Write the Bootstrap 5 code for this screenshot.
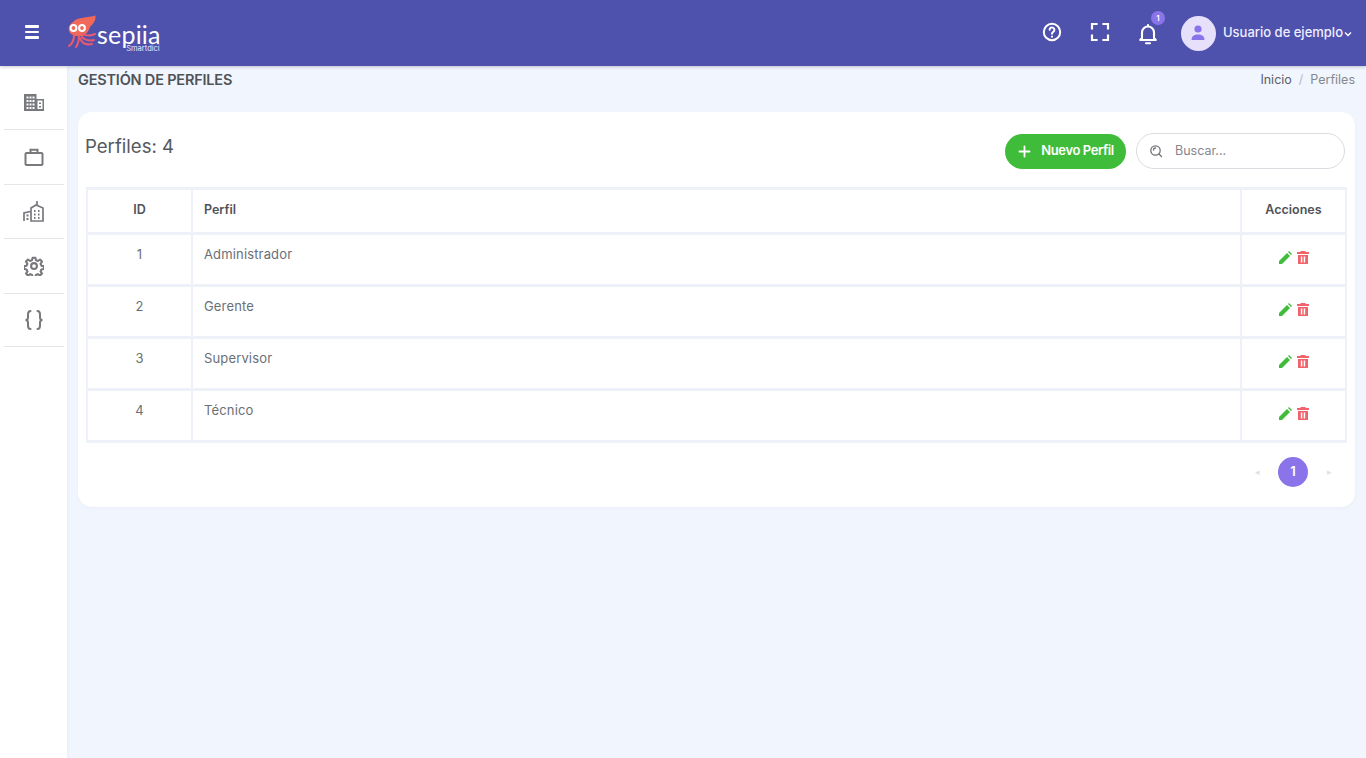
<!DOCTYPE html>
<html lang="es">
<head>
<meta charset="utf-8">
<title>Perfiles</title>
<link href="https://cdn.jsdelivr.net/npm/bootstrap@5.3.0/dist/css/bootstrap.min.css" rel="stylesheet">
<style>
html,body{height:100%;}
body{font-family:Inter,"Liberation Sans",sans-serif;background:#f1f5fd;color:#6a6f76;overflow:hidden;}
.topbar{height:66px;background:#4e52ac;color:#fff;padding:0 14px 0 25px;box-shadow:0 1px 3px rgba(40,40,90,.25);position:relative;z-index:2;}
.burger{width:14px;display:flex;flex-direction:column;gap:3px;margin:0 29px 2px 0;}
.burger span{display:block;height:2.4px;border-radius:1px;background:#fff;}
.logo-mark{flex:none;margin-top:-2px;}
.brand-word{font-size:25px;line-height:22px;letter-spacing:.2px;color:#fff;font-family:Lato,sans-serif;}
.brand-sub{font-size:7.5px;line-height:7px;color:#e8e8ff;text-align:right;margin-right:1px;}
.brand-box{margin-top:8px;margin-left:-1px;}
.top-ico{width:24px;height:24px;position:relative;display:block;margin-bottom:2px;}
.gap-ico{margin-left:24px;}
.alert-dot{position:absolute;top:-9px;right:-5px;width:14px;height:14px;border-radius:50%;background:#8b74ea;color:#fff;font-size:8px;line-height:14px;text-align:center;font-weight:600;}
.avatar{width:35px;height:35px;border-radius:50%;background:#e6e0fb;margin-left:21px;}
.user-name{font-size:13px;font-weight:500;color:#eef;margin-left:7px;}
.chev{margin-left:1px;margin-top:1px;}
.shell{height:692px;}
.rail{width:67px;flex:none;background:#fff;padding:9px 3px 0 4px;box-shadow:1px 0 3px rgba(60,70,120,.05);}
.rail-item{height:54.5px;border-bottom:1px solid #e5e6e9;display:flex;align-items:center;justify-content:center;}
.rail-item:first-child{height:55px;}
.rail-item:last-child{height:53.5px;}
.main{padding:0 11px;min-width:0;}
.page-head{height:46px;padding-top:5px;}
.page-title{font-size:14.5px;font-weight:600;color:#4f5358;margin:0;line-height:18px;letter-spacing:-.2px;}
.crumbs{font-size:12.5px;line-height:18px;margin:0;--bs-breadcrumb-divider-color:#b5b8bd;--bs-breadcrumb-item-padding-x:7px;--bs-breadcrumb-margin-bottom:0;}
.crumbs .breadcrumb-item{color:#85898f;}
.crumbs a{color:#5c6066;text-decoration:none;}
.sheet{border:0;border-radius:14px;background:#fff;padding:21px 8px 0 8px;height:395px;box-shadow:0 1px 3px rgba(80,90,140,.05);}
.sheet-head{height:54px;}
.sheet-title{font-size:18.6px;line-height:26px;margin:0 0 0 -1px;color:#55595f;font-weight:400;}
.btn-new{background:#3fbd3a;border:0;color:#fff;border-radius:18px;height:35px;width:121px;font-size:13px;font-weight:600;padding:0 0 1px 1px;letter-spacing:-.4px;margin-top:1px;gap:10px;}
.btn-new:hover{background:#3fbd3a;color:#fff;}
.search-box{width:209px;height:36px;margin:0 2px 0 10px;border:1px solid #d9dce0;border-radius:18px;padding:0 12px;gap:12px;}
.search-box input{border:0;outline:0;background:transparent;font-size:12.5px;width:140px;padding:0;color:#666;}
.search-box input::placeholder{color:#84878f;opacity:1;}
.perfil-table{border-collapse:collapse;width:100%;margin:0;table-layout:fixed;color:#6a6f76;}
.perfil-table th,.perfil-table td{border-style:solid;border-color:#eef1f8;border-width:3px 2px;padding:0 11px;font-size:13px;letter-spacing:.15px;}
.perfil-table th{height:45px;color:#4f5358;font-weight:600;font-size:12.5px;vertical-align:middle;padding-bottom:2px;letter-spacing:0;}
.perfil-table td{height:52px;vertical-align:top;padding-top:9px;line-height:20px;}
.perfil-table td.acts{padding-top:15px;}
.acts-row{gap:3px;}
.pager{margin:14px 0 0;justify-content:flex-end;}
.pager .pg{width:30px;height:30px;display:flex;align-items:center;justify-content:center;font-size:9px;color:#dfe1e5;border-radius:50%;margin:0 3px;}
.pager .pg.on{background:#8b74ea;color:#fff;font-size:13px;font-weight:600;}
</style>
</head>
<body>
<nav class="topbar d-flex align-items-center">
  <div class="burger"><span></span><span></span><span></span></div>
  <svg class="logo-mark" width="30" height="34" viewBox="0 0 30 34" aria-hidden="true">
    <path d="M27.500.5C20 3 10 2 6 6 2 9 0 12 1 16c1 3 4 4 6 5h8c4-2 6-6 7-9 3-3 6-6 5.500-11.500z" fill="#f0695a"/>
    <g fill="none" stroke="#e85a70" stroke-width="2.100" stroke-linecap="round">
      <path d="M6 20C6 25 4 29 1 31M11 21c0 5-1 8-3 11M15 19c3 2 7 2 12 0M14 22c4 4 8 4 12 3M12 23c2 6 7 7 12 6"/>
    </g>
    <circle cx="5.500" cy="13" r="3.900" fill="#fff"/><circle cx="14" cy="13" r="3.900" fill="#fff"/>
    <circle cx="5.500" cy="13" r="1.900" fill="#ee6a5a"/><circle cx="14" cy="13" r="1.900" fill="#ee6a5a"/>
  </svg>
  <div class="brand-box">
    <div class="brand-word">sepiia</div>
    <div class="brand-sub">Smartdici</div>
  </div>
  <div class="ms-auto d-flex align-items-center">
    <svg class="top-ico" viewBox="0 0 24 24" fill="none" stroke="#fff" stroke-width="2" stroke-linecap="round" aria-hidden="true"><circle cx="12" cy="12" r="8.200"/><path d="M9.600 9.800a2.400 2.400 0 1 1 3.600 2.100c-.8.500-1.200 1-1.200 1.900"/><path d="M12 16.600v.1"/></svg>
    <svg class="top-ico gap-ico" viewBox="0 0 24 24" fill="none" stroke="#fff" stroke-width="2.200" stroke-linecap="square" aria-hidden="true"><path d="M8.500 4H4v4.500M15.500 4H20v4.500M4 15.500V20h4.500M20 15.500V20h-4.500"/></svg>
    <span class="top-ico gap-ico">
      <svg width="24" height="24" viewBox="0 0 24 24" fill="none" stroke="#fff" stroke-width="2.100" stroke-linejoin="round" stroke-linecap="round" aria-hidden="true"><path d="M6 16V10.500a6 6 0 0 1 12 0V16l1.800 2H4.200z"/><path d="M10 21.200h4"/><path d="M12 3v1"/></svg>
      <span class="alert-dot">1</span>
    </span>
    <span class="avatar d-flex align-items-center justify-content-center">
      <svg width="18" height="18" viewBox="0 0 18 18" fill="#8b74ea" aria-hidden="true"><circle cx="9" cy="5" r="3.600"/><path d="M2.500 16c0-3.800 2.800-5.500 6.500-5.500s6.500 1.700 6.500 5.500z"/></svg>
    </span>
    <span class="user-name">Usuario de ejemplo</span>
    <svg class="chev" width="8" height="8" viewBox="0 0 8 8" fill="none" stroke="#fff" stroke-width="1.400" aria-hidden="true"><path d="M1 2.500 4 5.500 7 2.500"/></svg>
  </div>
</nav>
<div class="shell d-flex">
  <aside class="rail">
    <div class="rail-item"><svg width="20" height="17" viewBox="0 0 20 17" fill="#77797d" aria-hidden="true"><path fill-rule="evenodd" d="M0 0h12.500v5H20v12H0zM2.500 2.500v2h2v-2zM5.500 2.500v2h2v-2zM8.500 2.500v2h2v-2zM2.500 6v2h2V6zM5.500 6v2h2V6zM8.500 6v2h2V6zM2.500 9.500v2h2v-2zM5.500 9.500v2h2v-2zM8.500 9.500v2h2v-2zM2.500 13v2h2v-2zM5.500 13v2h2v-2zM8.500 13v2h2v-2zM13.500 6.500V15H18.500V6.500zM15 8.500h2v1.500h-2zM15 12h2v1.500h-2z"/></svg></div>
    <div class="rail-item"><svg width="20" height="18" viewBox="0 0 20 18" fill="none" stroke="#77797d" stroke-width="2" aria-hidden="true"><rect x="1.500" y="5" width="17" height="12" rx="1"/><path d="M6.500 5V1.800h7V5"/></svg></div>
    <div class="rail-item"><svg width="22" height="22" viewBox="0 0 22 22" fill="none" stroke="#77797d" stroke-width="1.700" aria-hidden="true"><path d="M1 21v-8l6-1.500M8 21V8l5-3 7 3v13zM14 5V1"/><path d="M11 11h1.500M15 11h1.500M11 14.500h1.500M15 14.500h1.500M11 18h1.500M15 18h1.500M3.500 15.500h2M3.500 19h2" stroke-width="2"/></svg></div>
    <div class="rail-item"><svg width="20" height="20" viewBox="0 0 24 24" fill="none" stroke="#77797d" stroke-width="2.500" stroke-linejoin="round" aria-hidden="true"><circle cx="12" cy="12" r="3.500"/><path d="M10.300 2h3.400l.6 3 2.300 1 2.600-1.700 2.400 2.400-1.700 2.600 1 2.300 3 .6v3.400l-3 .6-1 2.300 1.700 2.600-2.400 2.400-2.600-1.700-2.300 1-.6 3h-3.400l-.6-3-2.300-1-2.600 1.700-2.400-2.400 1.700-2.600-1-2.300-3-.6v-3.400l3-.6 1-2.300-1.700-2.600 2.400-2.400 2.600 1.700 2.300-1z"/></svg></div>
    <div class="rail-item"><svg width="20" height="20" viewBox="0 0 20 20" fill="none" stroke="#77797d" stroke-width="2" stroke-linecap="round" aria-hidden="true"><path d="M6.500 1C4 1 4 2.500 4 4.500v3C4 9 3 10 1.500 10 3 10 4 11 4 12.500v3c0 2 0 3.500 2.500 3.500M13.500 1C16 1 16 2.500 16 4.500v3c0 1.500 1 2.500 2.500 2.500-1.500 0-2.500 1-2.500 2.500v3c0 2 0 3.500-2.500 3.500"/></svg></div>
  </aside>
  <main class="main flex-grow-1">
    <div class="page-head d-flex justify-content-between align-items-start">
      <h1 class="page-title">GESTIÓN DE PERFILES</h1>
      <ol class="breadcrumb crumbs">
        <li class="breadcrumb-item"><a href="#">Inicio</a></li>
        <li class="breadcrumb-item active">Perfiles</li>
      </ol>
    </div>
    <section class="card sheet">
      <div class="sheet-head d-flex align-items-start">
        <h2 class="sheet-title">Perfiles: 4</h2>
        <button class="btn btn-new ms-auto d-flex align-items-center justify-content-center" type="button">
          <svg width="13" height="13" viewBox="0 0 13 13" stroke="#fff" stroke-width="1.800" stroke-linecap="round" aria-hidden="true"><path d="M6.500 1.500v10M1.500 6.500h10"/></svg>
          Nuevo Perfil
        </button>
        <div class="search-box d-flex align-items-center">
          <svg width="14" height="14" viewBox="0 0 14 14" fill="none" stroke="#6f7278" stroke-width="1.300" stroke-linecap="round" aria-hidden="true"><circle cx="6.500" cy="6.500" r="4.700"/><path d="M10 10l2.500 2.500M4.500 6a2 2 0 0 1 2-2"/></svg>
          <input type="text" placeholder="Buscar...">
        </div>
      </div>
      <table class="perfil-table">
        <colgroup><col style="width:105px"><col><col style="width:105px"></colgroup>
        <thead><tr><th class="text-center">ID</th><th>Perfil</th><th class="text-center">Acciones</th></tr></thead>
        <tbody>
          <tr><td class="text-center">1</td><td>Administrador</td><td class="acts"><div class="acts-row d-flex justify-content-center"><svg width="15" height="15" viewBox="0 0 15 15" fill="#3fbd3a" aria-hidden="true"><path d="M1 14v-3l8-8 3 3-8 8zM10 2l1-1 3 3-1 1z"/></svg><svg width="14" height="15" viewBox="0 0 14 15" fill="#f0636b" aria-hidden="true"><path fill-rule="evenodd" d="M1 2h3.500V1h5v1H13v2H1zM2 5h10v9H2zM4.800 6.500v6h1.500v-6zM7.700 6.500v6h1.500v-6z"/></svg></div></td></tr>
          <tr><td class="text-center">2</td><td>Gerente</td><td class="acts"><div class="acts-row d-flex justify-content-center"><svg width="15" height="15" viewBox="0 0 15 15" fill="#3fbd3a" aria-hidden="true"><path d="M1 14v-3l8-8 3 3-8 8zM10 2l1-1 3 3-1 1z"/></svg><svg width="14" height="15" viewBox="0 0 14 15" fill="#f0636b" aria-hidden="true"><path fill-rule="evenodd" d="M1 2h3.500V1h5v1H13v2H1zM2 5h10v9H2zM4.800 6.500v6h1.500v-6zM7.700 6.500v6h1.500v-6z"/></svg></div></td></tr>
          <tr><td class="text-center">3</td><td>Supervisor</td><td class="acts"><div class="acts-row d-flex justify-content-center"><svg width="15" height="15" viewBox="0 0 15 15" fill="#3fbd3a" aria-hidden="true"><path d="M1 14v-3l8-8 3 3-8 8zM10 2l1-1 3 3-1 1z"/></svg><svg width="14" height="15" viewBox="0 0 14 15" fill="#f0636b" aria-hidden="true"><path fill-rule="evenodd" d="M1 2h3.500V1h5v1H13v2H1zM2 5h10v9H2zM4.800 6.500v6h1.500v-6zM7.700 6.500v6h1.500v-6z"/></svg></div></td></tr>
          <tr><td class="text-center">4</td><td>Técnico</td><td class="acts"><div class="acts-row d-flex justify-content-center"><svg width="15" height="15" viewBox="0 0 15 15" fill="#3fbd3a" aria-hidden="true"><path d="M1 14v-3l8-8 3 3-8 8zM10 2l1-1 3 3-1 1z"/></svg><svg width="14" height="15" viewBox="0 0 14 15" fill="#f0636b" aria-hidden="true"><path fill-rule="evenodd" d="M1 2h3.500V1h5v1H13v2H1zM2 5h10v9H2zM4.800 6.500v6h1.500v-6zM7.700 6.500v6h1.500v-6z"/></svg></div></td></tr>
        </tbody>
      </table>
      <div class="pager d-flex">
        <span class="pg">◂</span><span class="pg on">1</span><span class="pg">▸</span>
      </div>
    </section>
  </main>
</div>
</body>
</html>
